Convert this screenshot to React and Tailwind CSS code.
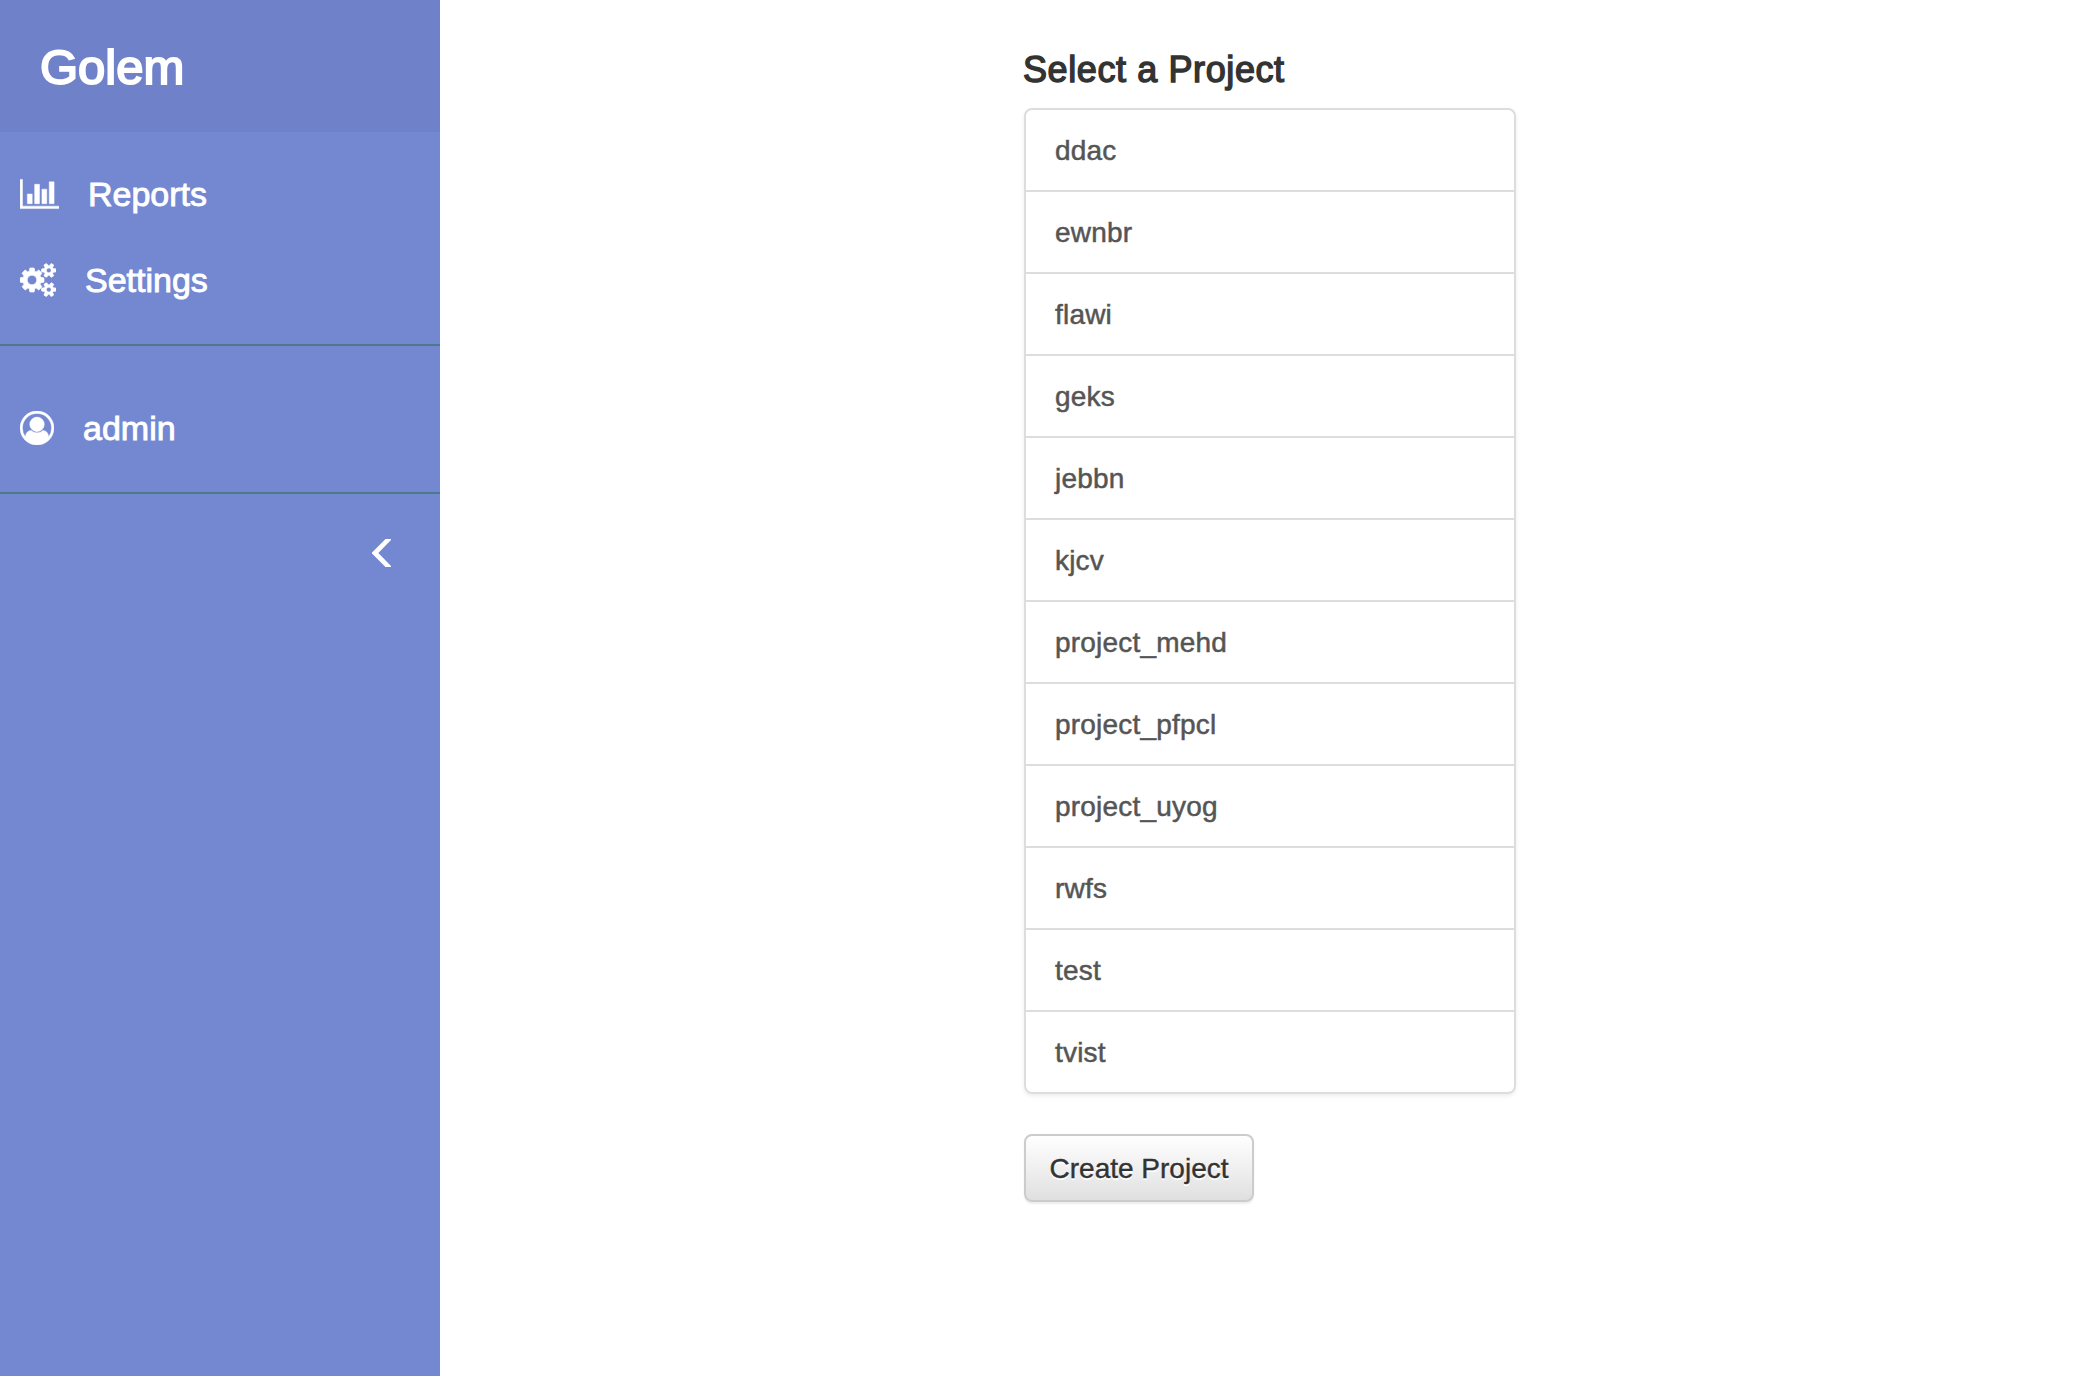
const projects = [
  'ddac', 'ewnbr', 'flawi', 'geks', 'jebbn', 'kjcv',
  'project_mehd', 'project_pfpcl', 'project_uyog', 'rwfs', 'test', 'tvist',
];

function BarChartIcon() {
  return (
    <svg className="h-[34px] w-[39px] shrink-0" viewBox="0 0 2048 1792" fill="currentColor" stroke="currentColor" strokeWidth="24">
      <path d="M640 896v512H384V896h256zm384-512v1024H768V384h256zm1024 1152v128H0V128h128v1408h1920zm-640-896v768h-256V640h256zm384-384v1152h-256V256h256z" />
    </svg>
  );
}

function CogsIcon() {
  return (
    <svg className="h-[34px] w-[36px] shrink-0" viewBox="0 0 1920 1792" fill="currentColor" stroke="currentColor" strokeWidth="36">
      <path d="M896 896q0-106-75-181t-181-75-181 75-75 181 75 181 181 75 181-75 75-181zm768 512q0-52-38-90t-90-38-90 38-38 90q0 53 37.5 90.5t90.5 37.5 90.5-37.5 37.5-90.5zm0-1024q0-52-38-90t-90-38-90 38-38 90q0 53 37.5 90.5t90.5 37.5 90.5-37.5 37.5-90.5zm-384 421v185q0 10-7 19.5t-16 10.5l-155 24q-11 35-32 76 34 48 90 115 7 11 7 20 0 12-7 19-23 30-82.5 89.5t-78.5 59.5q-11 0-21-7l-115-90q-37 19-77 31-11 108-23 155-7 24-30 24h-186q-11 0-20-7.5t-10-17.5l-23-153q-34-10-75-31l-118 89q-7 7-20 7-11 0-21-8-144-133-144-160 0-9 7-19 10-14 41-53t47-61q-23-44-35-82l-152-24q-10-1-17-9.5t-7-19.5v-185q0-10 7-19.5t16-10.5l155-24q11-35 32-76-34-48-90-115-7-11-7-20 0-12 7-20 22-30 82-89t79-59q11 0 21 7l115 90q34-18 77-32 11-108 23-154 7-24 30-24h186q11 0 20 7.5t10 17.5l23 153q34 10 75 31l118-89q8-7 20-7 11 0 21 8 144 133 144 160 0 8-7 19-12 16-42 54t-45 60q23 48 34 82l152 23q10 2 17 10.5t7 19.5zm640 533v140q0 16-149 31-12 27-30 52 51 113 51 138 0 4-4 7-122 71-124 71-8 0-46-47t-52-68q-20 2-30 2t-30-2q-14 21-52 68t-46 47q-2 0-124-71-4-3-4-7 0-25 51-138-18-25-30-52-149-15-149-31v-140q0-16 149-31 13-29 30-52-51-113-51-138 0-4 4-7 4-2 35-20t59-34 30-16q8 0 46 46.5t52 67.5q20-2 30-2t30 2q51-71 92-112l6-2q4 0 124 70 4 3 4 7 0 25-51 138 17 23 30 52 149 15 149 31zm0-1024v140q0 16-149 31-12 27-30 52 51 113 51 138 0 4-4 7-122 71-124 71-8 0-46-47t-52-68q-20 2-30 2t-30-2q-14 21-52 68t-46 47q-2 0-124-71-4-3-4-7 0-25 51-138-18-25-30-52-149-15-149-31v-140q0-16 149-31 13-29 30-52-51-113-51-138 0-4 4-7 4-2 35-20t59-34 30-16q8 0 46 46.5t52 67.5q20-2 30-2t30 2q51-71 92-112l6-2q4 0 124 70 4 3 4 7 0 25-51 138 17 23 30 52 149 15 149 31z" />
    </svg>
  );
}

function UserIcon() {
  return (
    <svg className="h-[34px] w-[34px] shrink-0" viewBox="0 0 1792 1792" fill="currentColor" stroke="currentColor" strokeWidth="24">
      <path d="M896 0q182 0 348 71t286 191 191 286 71 348q0 181-70.5 347t-190.5 286-286 191.5-349 71.5-349-71-285.5-191.5-190.5-286-71-347.5 71-348 191-286 286-191 348-71zm619 1351q149-205 149-455 0-156-61-298t-164-245-245-164-298-61-298 61-245 164-164 245-61 298q0 250 149 455 66-327 306-327 131 128 313 128t313-128q240 0 306 327zm-235-647q0-159-112.5-271.5t-271.5-112.5-271.5 112.5-112.5 271.5 112.5 271.5 271.5 112.5 271.5-112.5 112.5-271.5z" />
    </svg>
  );
}

function NavItem({ icon, label }) {
  return (
    <a className="flex h-[86px] items-center gap-[29px] pl-5 text-[34px] leading-[48px]">
      {icon}
      <span className="-mt-px [-webkit-text-stroke:0.9px_currentColor]">{label}</span>
    </a>
  );
}

export default function App() {
  return (
    <div className="flex h-[1376px] w-[2100px] bg-white font-['Liberation_Sans',Arial,sans-serif]">
      <aside className="w-[440px] shrink-0 bg-[#7488d2] text-white">
        <div className="flex h-[132px] items-center bg-[#6f81c8] pt-px pl-[40px]">
          <span className="text-[49px] leading-[70px] [-webkit-text-stroke:2px_currentColor]">Golem</span>
        </div>
        <nav className="h-[214px] border-b-2 border-[#4a7a8c] pt-[19px]">
          <NavItem icon={<BarChartIcon />} label="Reports" />
          <NavItem icon={<CogsIcon />} label="Settings" />
        </nav>
        <nav className="h-[148px] border-b-2 border-[#4a7a8c] pt-[39px]">
          <NavItem icon={<UserIcon />} label="admin" />
        </nav>
        <div className="flex justify-end pt-[45px] pr-[49px]">
          <svg className="h-[28px] w-[19px]" viewBox="0 0 19 28" fill="currentColor">
            <path d="M13.5 0H19V1L6.3 14L19 27V28H13.5L0 14.5V13.5Z" />
          </svg>
        </div>
      </aside>
      <main className="pt-[50px] pl-[583px]">
        <h4 className="h-[58px] text-[36px] leading-[40px] tracking-[0.6px] text-[#333] [-webkit-text-stroke:1.4px_currentColor]">
          Select a Project
        </h4>
        <div className="ml-px w-[492px] rounded-lg border-2 border-[#ddd] shadow-[0_2px_4px_rgba(0,0,0,0.075)]">
          {projects.map((name) => (
            <a key={name} className="flex h-[82px] items-center border-b-2 border-[#ddd] pt-px pl-[29px] text-[28px] leading-[40px] text-[#555] last:h-[80px] last:border-b-0">
              <span className="tracking-[0.2px] [-webkit-text-stroke:0.5px_currentColor]">{name}</span>
            </a>
          ))}
        </div>
        <button className="mt-[40px] ml-px flex h-[68px] w-[230px] items-center justify-center rounded-lg border-2 border-[#ccc] bg-linear-to-b from-white to-[#e0e0e0] pt-px text-[28px] leading-[40px] text-[#333] shadow-[inset_0_2px_0_rgba(255,255,255,0.15),0_2px_2px_rgba(0,0,0,0.075)] [text-shadow:0_2px_0_#fff]">
          <span className="whitespace-nowrap [-webkit-text-stroke:0.4px_currentColor]">Create Project</span>
        </button>
      </main>
    </div>
  );
}
